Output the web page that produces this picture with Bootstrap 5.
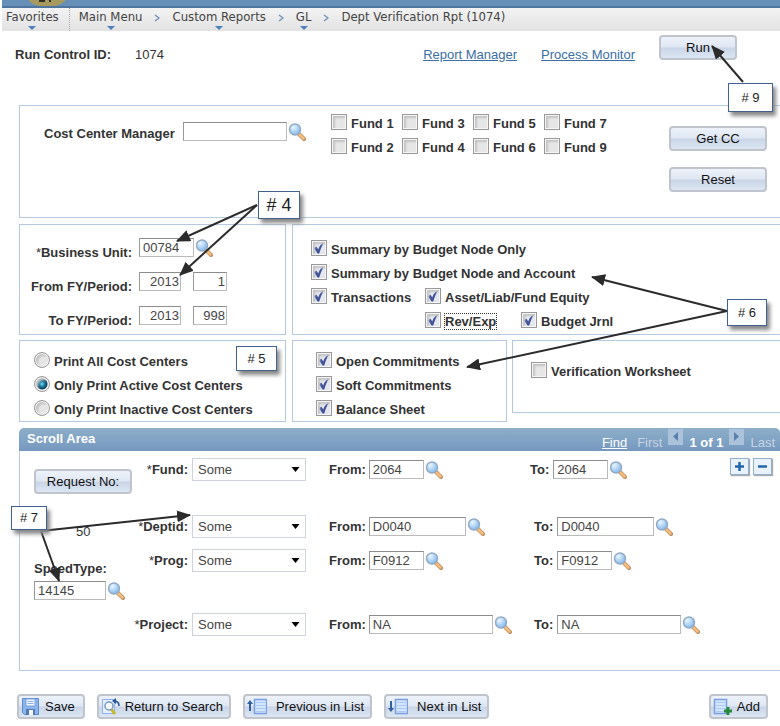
<!DOCTYPE html>
<html lang="en">
<head>
<meta charset="utf-8">
<meta name="viewport" content="width=device-width, initial-scale=1">
<title>Dept Verification Rpt (1074)</title>
<link href="https://cdn.jsdelivr.net/npm/bootstrap@5.3.0/dist/css/bootstrap.min.css" rel="stylesheet">
<style>
body{font:13px/16px "Liberation Sans",Arial,sans-serif;color:#333;background:#fff;overflow-x:hidden}
.banner{height:8px;background:#6790b9;border-bottom:2px solid #4f749d;margin-left:2px;overflow:hidden}
.banner svg{display:block;margin-left:20px}
.crumbs{height:23px;margin-left:2px;background:linear-gradient(#f3f3f3,#e2e2e2);font-family:"DejaVu Sans Condensed","DejaVu Sans",Tahoma,sans-serif;font-size:13px;padding-left:4px}
.crumbs a,.crumbs span{color:#444;text-decoration:none;line-height:18px}
.crumbs .menu-link{display:flex;flex-direction:column;align-items:center}
.crumbs .menu-link::after{content:"";border:4px solid transparent;border-top-color:#4a80bd;border-bottom:0}
.crumbs .divider{border-left:1px dotted #aaa;margin:0 9px 0 10px}
.crumbs .sep{width:6px;height:8px;margin:6px 12px 0}
.run-row{height:74px;padding:4px 43px 0 15px}
.run-row a{color:#3a6ea5}
.run-row .drop{margin-top:12px}
b,.lbl{font-weight:700;color:#333}
.star{font-weight:400}
.ps-btn{font-size:13px;line-height:16px;height:25px;padding:0 10px;color:#111;border:2px solid #c0c5cd;border-radius:4px;background:linear-gradient(#edf2fa 0,#dfe7f3 48%,#c9d5e7 52%,#dce6f3 100%);white-space:nowrap}
.ps-btn:hover{border-color:#8fa3bf}
.ps-btn.wide{width:98px}
.ps-btn.run{width:78px}
.box{border:1px solid #b4c9de}
.box-open{border-right:0}
.page{margin-left:19px}
.txt{height:19px;padding:0 3px;font-size:13px;line-height:16px;color:#444;border:1px solid #bbb;border-top-color:#8d8d8d;border-left-color:#999;border-radius:0;background:#fff}
.num{text-align:right;padding:0 1px}
.w34{width:34px}.w42{width:42px}.w55{width:55px}.w72{width:72px}.w97{width:97px}.w104{width:104px}.w124{width:124px}
.lens{border:0;background:none;padding:0;width:18px;height:19px;line-height:0;margin-left:1px}
.lens svg{width:18px;height:18px}
.opt{display:flex;align-items:flex-start;gap:4px}
.opt label{font-weight:700;padding-top:2px;white-space:nowrap}
.opt .form-check-input{margin:0;width:16px;height:16px;flex:none;border:1px solid #999;background-color:#e6e6e6;box-shadow:inset 0 0 0 1px #f5f5f5,inset 2px 2px 2px 1px #c4c4c4}
.opt .form-check-input[type=checkbox]{border-radius:0}
.opt .form-check-input[type=checkbox]:checked{background:#e3e6ec url("data:image/svg+xml,%3Csvg xmlns='http://www.w3.org/2000/svg' viewBox='0 0 16 16'%3E%3Cpath d='M3 8 5.500 6.800 7.200 9.500C8.500 6 10.500 3.500 13 2.500 11 5.500 9.500 9 8.300 13.500H6.500Z' fill='%23425299'/%3E%3C/svg%3E") center/16px no-repeat}
.opt .form-check-input[type=radio]:checked{background:radial-gradient(circle at 50% 50%,#8ce2f5 0,#2790b5 2px,#0b3c5c 5px,#eee 6px)}
.focused{outline:1px dotted #333;line-height:15px}
.filter-panel{height:113px;padding:16px 13px 0 24px;margin-bottom:6px}
.filter-panel .manager{width:287px}
.fund-grid{display:grid;grid-template-columns:repeat(4,71px);row-gap:6px;margin-top:-8px}
.duo{display:grid;grid-template-columns:267px minmax(0,1fr);gap:6px;margin-bottom:5px}
.duo>.box{height:111px}
.period{padding:13px 0 0 9px}
.period .lbl{width:103px;text-align:right;padding-top:7px;margin-right:7px;white-space:nowrap}
.period .line{height:34px}
.summary{padding:15px 0 0 18px}
.summary .opt{height:24px}
.summary .wider{width:114px}
.summary .rev{width:96px}
.trio{display:grid;grid-template-columns:267px 215px minmax(0,1fr);gap:6px;align-items:start;margin-bottom:6px}
.trio>.box-open{margin-left:-1px}
.choices{height:82px;padding:11px 0 0 14px}
.choices.commit{padding-left:23px}
.choices .opt{height:24px}
.verify{height:73px;padding:21px 0 0 18px}
.scroll-head{height:23px;color:#fff;padding:3px 5px 0 8px;background:linear-gradient(#8dafc9,#7698c0);border-radius:5px 5px 0 0}
.scroll-head .pager{margin-top:4px;gap:6px}
.scroll-head a{color:#fff}
.dim{color:#c5d3e2}
.step{width:15px;height:16px;border:0;padding:0;background:#abc2db;line-height:0;margin-top:-6px}
.scroll-body{height:220px;border-top:0}
.side{width:112px;flex:none;padding:18px 0 0 14px}
.side .count{margin:30px 0 21px 42px}
.side .lens{flex:none}
.entries{padding-top:7px}
.entry{display:grid;grid-template-columns:60px 114px 220px minmax(0,1fr);height:22px}
.entry .lbl{padding-top:4px;margin-right:4px}
.entry>.lbl{text-align:right;white-space:nowrap}
.entry .from{padding-left:23px}
.entry .from .lbl{margin-right:3px}
.entry .txt,.entry .lens{margin-top:2px}
.row-fund{margin-bottom:35px}
.row-dept{margin-bottom:12px}
.row-prog{margin-bottom:42px}
.pick{height:23px;padding:0 20px 0 5px;font-size:13px;line-height:16px;border:1px solid #ccd3dc;border-radius:0;color:#444;background:#fff url("data:image/svg+xml,%3Csvg xmlns='http://www.w3.org/2000/svg' viewBox='0 0 8 5'%3E%3Cpath d='M0 0h8L4 5z'/%3E%3C/svg%3E") right 5px center/9px 5px no-repeat}
.sq{width:19px;height:17px;border:1px solid #8fb0d0;box-shadow:1px 1px 1px #aaa;background:#e9f2fb;padding:0;line-height:0}
.actions{padding:23px 12px 6px 17px;gap:12px}
.actions .ps-btn{padding:0 6px 0 2px;display:flex;align-items:center;gap:5px}
.notes{left:0;top:0;width:780px;height:726px;pointer-events:none}
.note{position:absolute;background:#fff;border:1px solid #41618f;box-shadow:3px 4px 4px #888;color:#222;display:flex;align-items:center;justify-content:center;pointer-events:none}
.n4{left:258px;top:191px;width:42px;height:28px;font-size:18px}
.n5{left:236px;top:346px;width:41px;height:25px}
.n6{left:727px;top:299px;width:40px;height:27px}
.n7{left:11px;top:506px;width:36px;height:24px}
.n9{left:728px;top:83px;width:45px;height:29px}
</style>
<script src="https://cdn.jsdelivr.net/npm/bootstrap@5.3.0/dist/js/bootstrap.bundle.min.js"></script>
</head>
<body class="position-relative">
<svg width="0" height="0" class="position-absolute" aria-hidden="true">
<defs>
<radialGradient id="glass" cx=".35" cy=".3" r=".8"><stop offset="0" stop-color="#eaf6ff"/><stop offset="1" stop-color="#76b1ea"/></radialGradient>
<symbol id="lens" viewBox="0 0 18 18"><path d="m11 11 5 5" stroke="#b98c61" stroke-width="4" stroke-linecap="round"/><path d="m11 11 4.500 4.500" stroke="#f5bd7c" stroke-width="2.500" stroke-linecap="round"/><circle cx="7" cy="6.500" r="5.500" fill="url(#glass)" stroke="#92a9c2" stroke-width="1.400"/></symbol>
</defs>
</svg>
<header>
<div class="banner"><svg width="48" height="8" viewBox="0 0 48 8"><ellipse cx="25" cy="-6" rx="21" ry="13" fill="#a89a5c"/><path d="M17 0h6v2h-6zM27 0h2v2h-2z" fill="#332f28"/></svg></div>
<nav class="crumbs d-flex align-items-start" aria-label="Breadcrumb">
<a href="#" class="menu-link">Favorites</a><span class="divider align-self-stretch"></span>
<a href="#" class="menu-link">Main Menu</a>
<svg class="sep" viewBox="0 0 6 8"><path d="m1 1 4 3-4 3" fill="none" stroke="#6f8fb5" stroke-width="1.300"/></svg>
<a href="#" class="menu-link">Custom Reports</a>
<svg class="sep" viewBox="0 0 6 8"><path d="m1 1 4 3-4 3" fill="none" stroke="#6f8fb5" stroke-width="1.300"/></svg>
<a href="#" class="menu-link">GL</a>
<svg class="sep" viewBox="0 0 6 8"><path d="m1 1 4 3-4 3" fill="none" stroke="#6f8fb5" stroke-width="1.300"/></svg>
<span>Dept Verification Rpt (1074)</span>
</nav>
</header>
<main>
<div class="run-row d-flex align-items-start">
<b class="pt-2 mt-1 me-4">Run Control ID:</b><span class="drop">1074</span>
<a href="#" class="drop ms-auto">Report Manager</a>
<a href="#" class="drop ms-4">Process Monitor</a>
<button class="ps-btn run ms-4" type="button">Run</button>
</div>
<div class="page">
<section class="box box-open filter-panel d-flex align-items-start">
<div class="manager d-flex"><label class="lbl pt-1 me-2" for="ccm">Cost Center Manager</label><input id="ccm" class="txt w104" type="text"><button class="lens" type="button" aria-label="Look up manager"><svg><use href="#lens"/></svg></button></div>
<div class="fund-grid">
<div class="opt"><input class="form-check-input" type="checkbox" id="f1"><label for="f1">Fund 1</label></div>
<div class="opt"><input class="form-check-input" type="checkbox" id="f3"><label for="f3">Fund 3</label></div>
<div class="opt"><input class="form-check-input" type="checkbox" id="f5"><label for="f5">Fund 5</label></div>
<div class="opt"><input class="form-check-input" type="checkbox" id="f7"><label for="f7">Fund 7</label></div>
<div class="opt"><input class="form-check-input" type="checkbox" id="f2"><label for="f2">Fund 2</label></div>
<div class="opt"><input class="form-check-input" type="checkbox" id="f4"><label for="f4">Fund 4</label></div>
<div class="opt"><input class="form-check-input" type="checkbox" id="f6"><label for="f6">Fund 6</label></div>
<div class="opt"><input class="form-check-input" type="checkbox" id="f9"><label for="f9">Fund 9</label></div>
</div>
<div class="d-flex flex-column gap-3 ms-auto pt-1"><button class="ps-btn wide" type="button">Get CC</button><button class="ps-btn wide" type="button">Reset</button></div>
</section>
<div class="duo">
<section class="box period">
<div class="line d-flex align-items-start"><label class="lbl" for="bu"><span class="star">*</span>Business Unit:</label><input id="bu" class="txt w55" type="text" value="00784"><button class="lens" type="button" aria-label="Look up business unit"><svg><use href="#lens"/></svg></button></div>
<div class="line d-flex align-items-start"><label class="lbl" for="ffy">From FY/Period:</label><input id="ffy" class="txt num w42 me-2" type="text" value="2013"><input class="txt num w34 ms-1" type="text" value="1" aria-label="From period"></div>
<div class="line d-flex align-items-start"><label class="lbl" for="tfy">To FY/Period:</label><input id="tfy" class="txt num w42 me-2" type="text" value="2013"><input class="txt num w34 ms-1" type="text" value="998" aria-label="To period"></div>
</section>
<section class="box box-open summary">
<div class="opt"><input class="form-check-input" type="checkbox" id="s1" checked><label for="s1">Summary by Budget Node Only</label></div>
<div class="opt"><input class="form-check-input" type="checkbox" id="s2" checked><label for="s2">Summary by Budget Node and Account</label></div>
<div class="d-flex"><div class="opt wider"><input class="form-check-input" type="checkbox" id="s3" checked><label for="s3">Transactions</label></div><div class="opt"><input class="form-check-input" type="checkbox" id="s4" checked><label for="s4">Asset/Liab/Fund Equity</label></div></div>
<div class="d-flex"><div class="wider"></div><div class="opt rev"><input class="form-check-input" type="checkbox" id="s5" checked><label for="s5"><span class="focused">Rev/Exp</span></label></div><div class="opt"><input class="form-check-input" type="checkbox" id="s6" checked><label for="s6">Budget Jrnl</label></div></div>
</section>
</div>
<div class="trio">
<section class="box choices">
<div class="opt"><input class="form-check-input" type="radio" name="cc" id="r1"><label for="r1">Print All Cost Centers</label></div>
<div class="opt"><input class="form-check-input" type="radio" name="cc" id="r2" checked><label for="r2">Only Print Active Cost Centers</label></div>
<div class="opt"><input class="form-check-input" type="radio" name="cc" id="r3"><label for="r3">Only Print Inactive Cost Centers</label></div>
</section>
<section class="box choices commit">
<div class="opt"><input class="form-check-input" type="checkbox" id="c1" checked><label for="c1">Open Commitments</label></div>
<div class="opt"><input class="form-check-input" type="checkbox" id="c2" checked><label for="c2">Soft Commitments</label></div>
<div class="opt"><input class="form-check-input" type="checkbox" id="c3" checked><label for="c3">Balance Sheet</label></div>
</section>
<section class="box box-open verify">
<div class="opt"><input class="form-check-input" type="checkbox" id="v1"><label for="v1">Verification Worksheet</label></div>
</section>
</div>
<section>
<div class="scroll-head d-flex align-items-start">
<strong>Scroll Area</strong>
<div class="pager d-flex ms-auto"><a href="#" class="me-1">Find</a><span class="dim">First</span><button class="step" type="button" aria-label="Previous"><svg width="15" height="16"><path d="M10 3v9L5 7.500z" fill="#5b7eaa"/></svg></button><strong class="text-nowrap">1 of 1</strong><button class="step" type="button" aria-label="Next"><svg width="15" height="16"><path d="M5 3v9l5-4.500z" fill="#5b7eaa"/></svg></button><span class="dim">Last</span></div>
</div>
<div class="scroll-body box box-open d-flex align-items-start">
<div class="side">
<button class="ps-btn wide" type="button">Request No:</button>
<div class="count">50</div>
<label class="lbl d-block mb-1" for="speed">SpeedType:</label>
<div class="d-flex"><input id="speed" class="txt w72" type="text" value="14145"><button class="lens" type="button" aria-label="Look up speed type"><svg><use href="#lens"/></svg></button></div>
</div>
<div class="entries flex-grow-1">
<div class="entry row-fund">
<label class="lbl" for="fund"><span class="star">*</span>Fund:</label><select id="fund" class="pick form-select"><option>Some</option></select>
<div class="from d-flex"><label class="lbl" for="ff">From:</label><input id="ff" class="txt w55" type="text" value="2064"><button class="lens" type="button" aria-label="Look up fund from"><svg><use href="#lens"/></svg></button></div>
<div class="d-flex ps-1"><label class="lbl" for="ft">To:</label><input id="ft" class="txt w55" type="text" value="2064"><button class="lens" type="button" aria-label="Look up fund to"><svg><use href="#lens"/></svg></button>
<div class="d-flex gap-1 ms-auto pe-1 me-1"><button class="sq" type="button" aria-label="Add row"><svg width="17" height="15"><path d="M8.500 3v9M4 7.500h9" stroke="#2466ad" stroke-width="2.500"/></svg></button><button class="sq" type="button" aria-label="Delete row"><svg width="17" height="15"><path d="M4 7.500h9" stroke="#2466ad" stroke-width="2.500"/></svg></button></div></div>
</div>
<div class="entry row-dept">
<label class="lbl" for="dept"><span class="star">*</span>Deptid:</label><select id="dept" class="pick form-select"><option>Some</option></select>
<div class="from d-flex"><label class="lbl" for="df">From:</label><input id="df" class="txt w97" type="text" value="D0040"><button class="lens" type="button" aria-label="Look up dept from"><svg><use href="#lens"/></svg></button></div>
<div class="d-flex ps-2"><label class="lbl" for="dt">To:</label><input id="dt" class="txt w97" type="text" value="D0040"><button class="lens" type="button" aria-label="Look up dept to"><svg><use href="#lens"/></svg></button></div>
</div>
<div class="entry row-prog">
<label class="lbl" for="prog"><span class="star">*</span>Prog:</label><select id="prog" class="pick form-select"><option>Some</option></select>
<div class="from d-flex"><label class="lbl" for="pf">From:</label><input id="pf" class="txt w55" type="text" value="F0912"><button class="lens" type="button" aria-label="Look up prog from"><svg><use href="#lens"/></svg></button></div>
<div class="d-flex ps-2"><label class="lbl" for="pt">To:</label><input id="pt" class="txt w55" type="text" value="F0912"><button class="lens" type="button" aria-label="Look up prog to"><svg><use href="#lens"/></svg></button></div>
</div>
<div class="entry">
<label class="lbl" for="proj"><span class="star">*</span>Project:</label><select id="proj" class="pick form-select"><option>Some</option></select>
<div class="from d-flex"><label class="lbl" for="jf">From:</label><input id="jf" class="txt w124" type="text" value="NA"><button class="lens" type="button" aria-label="Look up project from"><svg><use href="#lens"/></svg></button></div>
<div class="d-flex ps-2"><label class="lbl" for="jt">To:</label><input id="jt" class="txt w124" type="text" value="NA"><button class="lens" type="button" aria-label="Look up project to"><svg><use href="#lens"/></svg></button></div>
</div>
</div>
</div>
</section>
</div>
<div class="actions d-flex">
<button class="ps-btn pe-2" type="button"><svg width="19" height="19"><path d="M1.500 1.500h16v16h-14l-2-2z" fill="#8cb4ec" stroke="#5c8cd0"/><path d="M5 2h9v7H5z" fill="#f3f8ff" stroke="#7aa3dc"/><path d="M6.500 4.500h6M6.500 6.500h6" stroke="#8cb0e0"/><path d="M5 12h9v6H5z" fill="#5579ae"/><path d="M8 13h4v5H8z" fill="#f3f8ff"/></svg>Save</button>
<button class="ps-btn" type="button"><svg width="19" height="19"><path d="M1.500 2.500h12v14h-12z" fill="#e6f0ff" stroke="#8bb2ec"/><path d="m10 12 4 5" stroke="#c9b92d" stroke-width="3"/><circle cx="8" cy="9" r="4" fill="#f7fbff" stroke="#7897be" stroke-width="1.500"/><path d="M18 9c0-4-2-5-5-5" fill="none" stroke="#2c5594" stroke-width="1.600"/><path d="m11 4 4-3v6z" fill="#2c5594"/></svg>Return to Search</button>
<button class="ps-btn" type="button"><svg width="20" height="19"><path d="M7.500 2.500h12v14h-12z" fill="#d4e6ff" stroke="#7a9fe0" stroke-width="1.500"/><path d="M9 5.500h9M9 8.500h9M9 11.500h9M9 14.500h9" stroke="#acc9f2"/><path d="M3 14V6" stroke="#315f9e" stroke-width="2"/><path d="m0 7 3-4 3 4z" fill="#315f9e"/></svg><span class="ms-1">Previous in List</span></button>
<button class="ps-btn" type="button"><svg width="20" height="19"><path d="M7.500 2.500h12v14h-12z" fill="#d4e6ff" stroke="#7a9fe0" stroke-width="1.500"/><path d="M9 5.500h9M9 8.500h9M9 11.500h9M9 14.500h9" stroke="#acc9f2"/><path d="M3 4v8" stroke="#315f9e" stroke-width="2"/><path d="m0 11 3 4 3-4z" fill="#315f9e"/></svg><span class="ms-1">Next in List</span></button>
<button class="ps-btn ms-auto" type="button"><svg width="19" height="19"><path d="M1.500 2.500h12v14h-12z" fill="#d4e6ff" stroke="#7a9fe0" stroke-width="1.500"/><path d="M3 5.500h9M3 8.500h9M3 11.500h9M3 14.500h9" stroke="#acc9f2"/><path d="M15 10v8M11 14h8" stroke="#25883b" stroke-width="2.800"/></svg>Add</button>
</div>
</main>
<svg class="notes position-absolute" viewBox="0 0 780 726" aria-hidden="true">
<defs><marker id="head" markerUnits="userSpaceOnUse" markerWidth="14" markerHeight="12" refX="13" refY="6" orient="auto"><path d="M0 0 14 6 0 12z" fill="#2b2b2b"/></marker></defs>
<g stroke="#2b2b2b" stroke-width="2"><path d="M743 82 712 46" marker-end="url(#head)"/><path d="M257 205 177 241" marker-end="url(#head)"/><path d="M257 205 180 275" marker-end="url(#head)"/><path d="M727 311 592 277" marker-end="url(#head)"/><path d="M727 311 467 367" marker-end="url(#head)"/><path d="M41 531 190 515" marker-end="url(#head)"/><path d="M41 531 59 581" marker-end="url(#head)"/></g>
</svg>
<div class="note n9"># 9</div>
<div class="note n4"># 4</div>
<div class="note n6"># 6</div>
<div class="note n5"># 5</div>
<div class="note n7"># 7</div>
</body>
</html>
